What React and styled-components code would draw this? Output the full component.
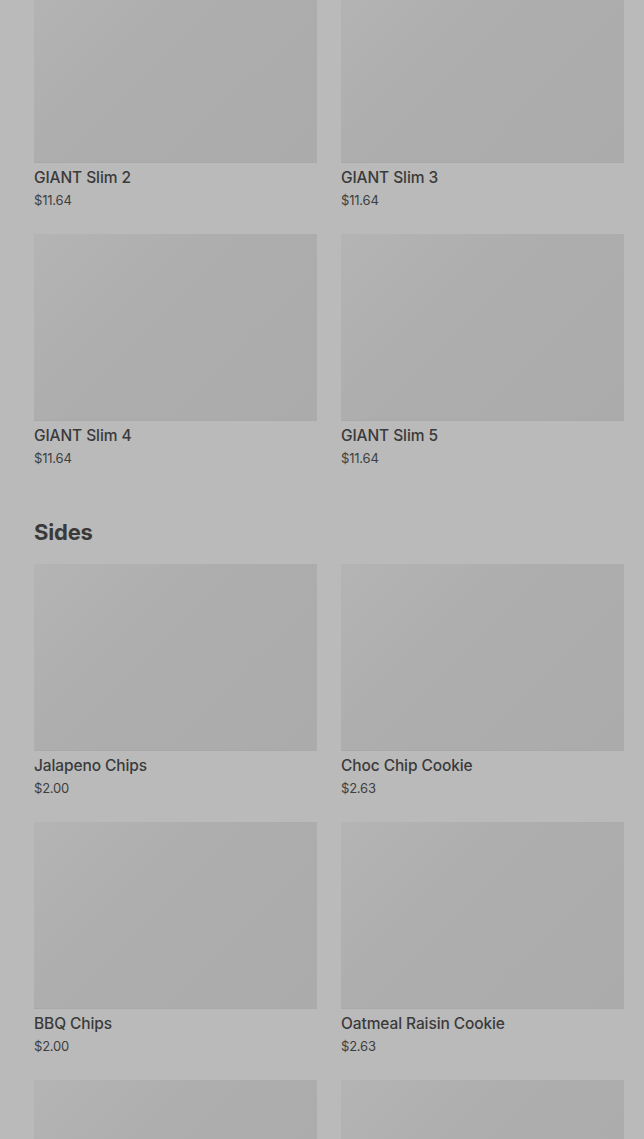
import React from "react";
import styled, { createGlobalStyle } from "styled-components";

const Global = createGlobalStyle`
	html, body {
		margin: 0;
		padding: 0;
		background: #bababa;
		overflow: hidden;
	}
	body {
		font-family: Inter, "Noto Sans", sans-serif;
		color: #3a3a3a;
	}
`;

const Page = styled.div`
	padding: 0 20px 0 34px;
	margin-top: -24px;
	height: 1163px;
	overflow: hidden;
`;

const Section = styled.section`
	margin-bottom: 50px;
`;

const Heading = styled.h2`
	margin: 0 0 16px;
	font-size: 22px;
	line-height: 32px;
	font-weight: 700;
	color: #3a3a3a;
	letter-spacing: -0.2px;
`;

const Grid = styled.div`
	display: grid;
	grid-template-columns: 1fr 1fr;
	column-gap: 24px;
	row-gap: 26px;
`;

const Card = styled.div`
	display: flex;
	flex-direction: column;
`;

const Thumb = styled.div`
	height: 187px;
	background: linear-gradient(135deg, #b4b4b4 0%, #adadad 45%, #ababab 100%);
	border-bottom: 1px solid #a9a9a9;
	box-sizing: border-box;
`;

const Title = styled.div`
	margin-top: 5px;
	font-size: 15.5px;
	line-height: 20px;
	font-weight: 500;
	color: #3a3a3a;
	letter-spacing: -0.1px;
`;

const Price = styled.div`
	margin-top: 4px;
	font-size: 13px;
	line-height: 16px;
	font-weight: 400;
	color: #3e3e3e;
	letter-spacing: -0.2px;
`;

const slims = [
	{ name: "GIANT Slim 2", price: "$11.64" },
	{ name: "GIANT Slim 3", price: "$11.64" },
	{ name: "GIANT Slim 4", price: "$11.64" },
	{ name: "GIANT Slim 5", price: "$11.64" },
];

const sides = [
	{ name: "Jalapeno Chips", price: "$2.00" },
	{ name: "Choc Chip Cookie", price: "$2.63" },
	{ name: "BBQ Chips", price: "$2.00" },
	{ name: "Oatmeal Raisin Cookie", price: "$2.63" },
	{ name: "", price: "" },
	{ name: "", price: "" },
];

const Item = ({ item }) => (
	<Card>
		<Thumb />
		{item.name && <Title>{item.name}</Title>}
		{item.price && <Price>{item.price}</Price>}
	</Card>
);

const App = () => {
	return (
		<>
			<Global />
			<Page>
				<Section>
					<Grid>
						{slims.map((it, i) => (
							<Item key={i} item={it} />
						))}
					</Grid>
				</Section>
				<Section>
					<Heading>Sides</Heading>
					<Grid>
						{sides.map((it, i) => (
							<Item key={i} item={it} />
						))}
					</Grid>
				</Section>
			</Page>
		</>
	);
};

export default App;
